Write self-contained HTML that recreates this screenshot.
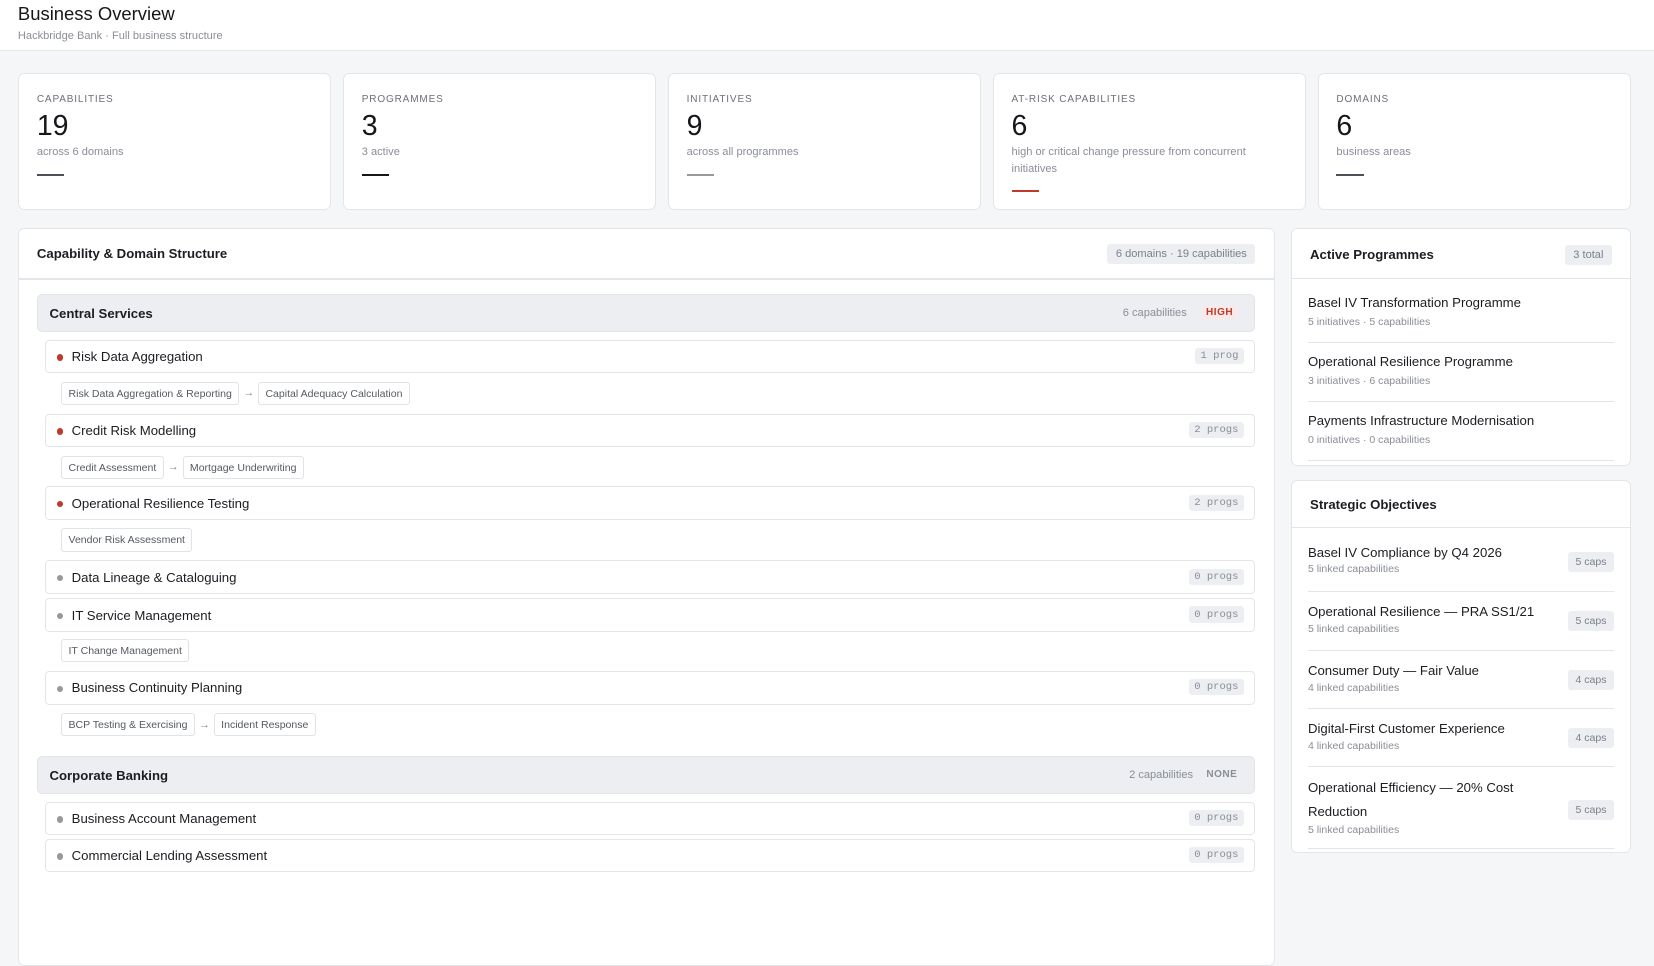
<!DOCTYPE html>
<html><head><meta charset="utf-8"><style>
html,body{margin:0;padding:0}
body{width:1568px;height:836px;overflow:hidden;background:#f5f6f8;font-family:"Liberation Sans",sans-serif;color:#1b1d22;zoom:1.05485;position:relative}
.a{position:absolute}
.hdr{left:0;top:0;width:1568px;height:47px;background:#fff;border-bottom:1px solid #e4e6ea}
.card{background:#fff;border:1px solid #e3e5e9;border-radius:6px;box-sizing:border-box}
.kl{font-size:9.5px;letter-spacing:.8px;color:#6b6f78;position:absolute;left:17px;top:19px}
.kn{font-size:27px;position:absolute;left:17px;top:34px;color:#15171b}
.ks{font-size:10.5px;color:#8a8e96;position:absolute;left:17px;top:67px;line-height:16px;width:250px}
.kb{position:absolute;left:17px;width:26px;height:2px;background:#4b4f57}
.ph{font-size:12.5px;font-weight:bold;color:#1b1d22}
.badge{background:#eceef1;color:#7d818a;font-size:10.5px;border-radius:3px;padding:4px 8px}
.dom{left:35px;width:1155px;height:36px;background:#eceef2;border:1px solid #e2e4e8;border-radius:5px;box-sizing:border-box}
.dom span.t{position:absolute;left:11px;top:10px;font-size:12.5px;font-weight:bold}
.row{left:43px;width:1147px;height:32px;background:#fff;border:1px solid #e3e5e9;border-radius:4px;box-sizing:border-box}
.row .d{position:absolute;left:10px;top:13px;width:6px;height:6px;border-radius:50%;background:#999}
.row .d.r{background:#c0392b}
.row .t{position:absolute;left:24px;top:8px;font-size:12.5px}
.row .p{position:absolute;right:10px;top:7px;font-family:"Liberation Mono",monospace;font-size:10px;color:#8a8e96;background:#eceef1;border-radius:3px;padding:2px 5px}
.chips{left:58px;height:22px;font-size:10px;color:#555a62;display:flex;align-items:center}
.chip{border:1px solid #e1e3e7;background:#fff;border-radius:3px;height:22px;line-height:21px;padding:0 6px;box-sizing:border-box}
.arr{color:#888;padding:0 4px;font-size:10px}
.pi{left:15px;width:290px;border-bottom:1px solid #e3e5e9}
.pt{font-size:12.5px;color:#1b1d22}
.ps{font-size:10px;color:#8a8e96}
.cap{position:absolute;right:0;background:#eceef1;color:#7d818a;font-size:10px;border-radius:3px;padding:4px 7px}
</style></head><body>
<div class="a hdr">
<div class="a" style="left:17px;top:3px;font-size:17.5px;color:#15171b">Business Overview</div>
<div class="a" style="left:17px;top:28px;font-size:10.5px;color:#8a8e96">Hackbridge Bank · Full business structure</div>
</div>

<div class="a card" style="left:17px;top:69px;width:297px;height:130px"><div class="kl">CAPABILITIES</div><div class="kn">19</div><div class="ks">across 6 domains</div><div class="kb" style="top:95px"></div></div>
<div class="a card" style="left:325px;top:69px;width:297px;height:130px"><div class="kl">PROGRAMMES</div><div class="kn">3</div><div class="ks">3 active</div><div class="kb" style="top:95px;background:#15171b"></div></div>
<div class="a card" style="left:633px;top:69px;width:297px;height:130px"><div class="kl">INITIATIVES</div><div class="kn">9</div><div class="ks">across all programmes</div><div class="kb" style="top:95px;background:#999"></div></div>
<div class="a card" style="left:941px;top:69px;width:297px;height:130px"><div class="kl">AT-RISK CAPABILITIES</div><div class="kn">6</div><div class="ks">high or critical change pressure from concurrent initiatives</div><div class="kb" style="top:110px;background:#c0392b"></div></div>
<div class="a card" style="left:1249px;top:69px;width:297px;height:130px"><div class="kl">DOMAINS</div><div class="kn">6</div><div class="ks">business areas</div><div class="kb" style="top:95px"></div></div>

<div class="a card" style="left:17px;top:216px;width:1192px;height:700px"></div>
<div class="a" style="left:18px;top:264px;width:1190px;height:1px;background:#e3e5e9"></div>
<div class="a ph" style="left:35px;top:233px">Capability &amp; Domain Structure</div>
<div class="a badge" style="right:378px;top:231px">6 domains · 19 capabilities</div>

<div class="a dom" style="top:279px"><span class="t">Central Services</span><span class="a" style="right:64px;top:11px;font-size:10.5px;color:#8a8e96">6 capabilities</span><span class="a" style="right:16px;top:10px;font-size:9.5px;font-weight:bold;color:#c0392b;background:#fbe9e7;padding:1px 4px;border-radius:3px;letter-spacing:.5px">HIGH</span></div>
<div class="a row" style="top:322px"><div class="d r"></div><div class="t">Risk Data Aggregation</div><div class="p">1 prog</div></div>
<div class="a chips" style="top:362px"><div class="chip">Risk Data Aggregation &amp; Reporting</div><span class="arr">→</span><div class="chip">Capital Adequacy Calculation</div></div>
<div class="a row" style="top:392px"><div class="d r"></div><div class="t">Credit Risk Modelling</div><div class="p">2 progs</div></div>
<div class="a chips" style="top:432px"><div class="chip">Credit Assessment</div><span class="arr">→</span><div class="chip">Mortgage Underwriting</div></div>
<div class="a row" style="top:461px"><div class="d r"></div><div class="t">Operational Resilience Testing</div><div class="p">2 progs</div></div>
<div class="a chips" style="top:501px"><div class="chip">Vendor Risk Assessment</div></div>
<div class="a row" style="top:531px"><div class="d"></div><div class="t">Data Lineage &amp; Cataloguing</div><div class="p">0 progs</div></div>
<div class="a row" style="top:567px"><div class="d"></div><div class="t">IT Service Management</div><div class="p">0 progs</div></div>
<div class="a chips" style="top:606px"><div class="chip">IT Change Management</div></div>
<div class="a row" style="top:636px"><div class="d"></div><div class="t">Business Continuity Planning</div><div class="p">0 progs</div></div>
<div class="a chips" style="top:676px"><div class="chip">BCP Testing &amp; Exercising</div><span class="arr">→</span><div class="chip">Incident Response</div></div>

<div class="a dom" style="top:717px"><span class="t">Corporate Banking</span><span class="a" style="right:58px;top:11px;font-size:10.5px;color:#8a8e96">2 capabilities</span><span class="a" style="right:16px;top:11px;font-size:9.5px;font-weight:bold;color:#8a8e96;letter-spacing:.5px">NONE</span></div>
<div class="a row" style="top:760px"><div class="d"></div><div class="t">Business Account Management</div><div class="p">0 progs</div></div>
<div class="a row" style="top:795px"><div class="d"></div><div class="t">Commercial Lending Assessment</div><div class="p">0 progs</div></div>

<div class="a card" style="left:1224px;top:216px;width:322px;height:226px">
<div class="a" style="left:0;top:47px;width:320px;height:1px;background:#e3e5e9"></div>
<div class="a ph" style="left:17px;top:17px">Active Programmes</div>
<div class="a badge" style="right:17px;top:15px">3 total</div>
<div class="a pi" style="top:63px;height:44px"><div class="pt">Basel IV Transformation Programme</div><div class="ps" style="margin-top:5px">5 initiatives · 5 capabilities</div></div>
<div class="a pi" style="top:119px;height:44px"><div class="pt">Operational Resilience Programme</div><div class="ps" style="margin-top:5px">3 initiatives · 6 capabilities</div></div>
<div class="a pi" style="top:175px;height:44px"><div class="pt">Payments Infrastructure Modernisation</div><div class="ps" style="margin-top:5px">0 initiatives · 0 capabilities</div></div>
</div>

<div class="a card" style="left:1224px;top:455px;width:322px;height:354px">
<div class="a" style="left:0;top:44px;width:320px;height:1px;background:#e3e5e9"></div>
<div class="a ph" style="left:17px;top:15px">Strategic Objectives</div>
<div class="a pi" style="top:61px;height:43px"><div class="pt">Basel IV Compliance by Q4 2026</div><div class="ps" style="margin-top:3px">5 linked capabilities</div><span class="cap" style="top:6px">5 caps</span></div>
<div class="a pi" style="top:117px;height:43px"><div class="pt">Operational Resilience — PRA SS1/21</div><div class="ps" style="margin-top:3px">5 linked capabilities</div><span class="cap" style="top:6px">5 caps</span></div>
<div class="a pi" style="top:173px;height:42px"><div class="pt">Consumer Duty — Fair Value</div><div class="ps" style="margin-top:3px">4 linked capabilities</div><span class="cap" style="top:6px">4 caps</span></div>
<div class="a pi" style="top:228px;height:42px"><div class="pt">Digital-First Customer Experience</div><div class="ps" style="margin-top:3px">4 linked capabilities</div><span class="cap" style="top:6px">4 caps</span></div>
<div class="a pi" style="top:284px;height:64px"><div class="pt" style="line-height:22px;margin-top:-4px">Operational Efficiency — 20% Cost<br>Reduction</div><div class="ps" style="margin-top:1px">5 linked capabilities</div><span class="cap" style="top:18px">5 caps</span></div>
</div>
</body></html>
